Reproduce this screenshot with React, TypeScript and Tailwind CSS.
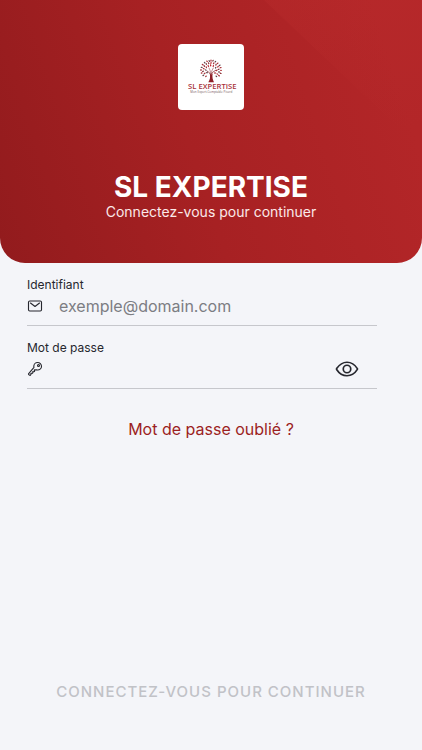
import React, { useState } from "react";
import { IoEyeOutline, IoKeyOutline, IoMailOutline } from "react-icons/io5";

// x, y, rotation, colour of every leaf of the tree
const leaves: [number, number, number, string][] = [
  [32, 14, 0, "#a8323a"],
  [27, 15, -30, "#5f4449"],
  [38, 14, 30, "#7d3a3f"],
  [20, 16, -50, "#b0353b"],
  [45, 17, 50, "#5f4449"],
  [32, 21, 10, "#b81f26"],
  [25, 22, -20, "#8a2a30"],
  [40, 22, 30, "#a8323a"],
  [13, 20, -40, "#5f4449"],
  [52, 22, 50, "#b0353b"],
  [18, 24, -10, "#7d3a3f"],
  [47, 26, 20, "#8a2a30"],
  [7, 26, -60, "#a8323a"],
  [58, 28, 60, "#5f4449"],
  [31, 28, -10, "#b81f26"],
  [39, 30, 20, "#b81f26"],
  [24, 30, -30, "#b81f26"],
  [12, 30, -40, "#8a2a30"],
  [53, 32, 40, "#b81f26"],
  [4, 34, -80, "#5f4449"],
  [61, 35, 80, "#a8323a"],
  [18, 34, -20, "#a8323a"],
  [46, 35, 30, "#5f4449"],
  [10, 38, -70, "#b0353b"],
  [55, 40, 70, "#7d3a3f"],
  [2, 42, -90, "#a8323a"],
  [62, 43, 90, "#b0353b"],
  [16, 42, -60, "#5f4449"],
  [49, 43, 60, "#a8323a"],
  [8, 46, -110, "#7d3a3f"],
  [56, 48, 110, "#5f4449"],
  [4, 51, -110, "#b0353b"],
  [61, 52, 110, "#8a2a30"],
  [13, 52, -120, "#a8323a"],
  [51, 54, 120, "#b0353b"],
  [20, 50, -90, "#5f4449"],
  [44, 51, 90, "#b0353b"],
  [9, 58, -120, "#5f4449"],
  [56, 59, 120, "#a8323a"],
  [17, 61, -130, "#a8323a"],
  [48, 61, 130, "#5f4449"],
];

const Logo = () => (
  <div className="flex size-[66px] items-center justify-center rounded-[4px] bg-white">
    <svg viewBox="0 0 198 198" className="size-full" role="img" aria-label="SL Expertise">
      <g transform="translate(67 36)">
        {leaves.map(([x, y, angle, color], i) => (
          <ellipse
            key={i}
            cx={x}
            cy={y}
            rx="2"
            ry="3.2"
            fill={color}
            transform={`rotate(${angle} ${x} ${y})`}
          />
        ))}
        <g fill="none" stroke="#8a2a30" strokeLinecap="round">
          <path d="M32 62 C33 53 27 50 20 45" strokeWidth="2.4" />
          <path d="M32 62 C31 51 38 48 46 43" strokeWidth="2.4" />
          <path d="M31 55 C31 46 29 42 26 36 M33 54 C33 46 36 41 39 36" strokeWidth="1.6" />
        </g>
        <path
          d="M28 52 C31 62 29 72 24 79 L41 79 C37 72 35 62 37 52 L32 57 Z"
          fill="#8f2027"
        />
      </g>
      <text
        x="103"
        y="135"
        textAnchor="middle"
        fontSize="23"
        fontWeight="600"
        fill="#a8323a"
        className="font-['Open_Sans',sans-serif]"
      >
        SL EXPERTISE
      </text>
      <text
        x="100"
        y="148"
        textAnchor="middle"
        fontSize="9"
        fill="#75595d"
        className="font-['Open_Sans',sans-serif]"
      >
        Mon Expert-Comptable Picard
      </text>
    </svg>
  </div>
);

const Header = () => (
  <header className="relative flex flex-col items-center overflow-hidden rounded-b-[25px] bg-linear-[72deg,#921b1d_0%,#a72123_45%,#b32628_90%] pt-11 pb-[42px]">
    <svg
      viewBox="0 0 422 263"
      preserveAspectRatio="none"
      className="absolute inset-0 size-full"
      aria-hidden="true"
    >
      <defs>
        <linearGradient id="shine" x1="0" y1="0" x2="0.2" y2="1">
          <stop offset="0" stopColor="#c03030" stopOpacity="0.25" />
          <stop offset="1" stopColor="#c03030" stopOpacity="0" />
        </linearGradient>
      </defs>
      <path d="M264 0 L422 150 V0 Z" fill="url(#shine)" />
    </svg>
    <div className="relative flex flex-col items-center">
      <Logo />
      <h1 className="mt-[61px] text-[28px] leading-8 font-bold text-white">SL EXPERTISE</h1>
      <p className="text-sm leading-[18px] text-[#fbe9e9]">Connectez-vous pour continuer</p>
    </div>
  </header>
);

const App = () => {
  const [visible, setVisible] = useState(false);

  return (
    <div className="flex min-h-screen flex-col bg-[#f4f5f9] font-['Inter',sans-serif] text-[#26272e]">
      <Header />
      <form className="flex flex-1 flex-col" onSubmit={(e) => e.preventDefault()}>
        <div className="mr-[45px] ml-[27px] flex flex-col gap-3 pt-3">
          <div className="border-b border-[#c6c7cc] pb-2">
            <label htmlFor="login" className="block text-xs leading-5">
              Identifiant
            </label>
            <div className="flex h-[22px] items-center gap-4">
              <IoMailOutline className="size-4 shrink-0 [&_*]:stroke-[36px]" />
              <input
                id="login"
                type="email"
                placeholder="exemple@domain.com"
                className="min-w-0 flex-1 bg-transparent text-base leading-5 outline-none placeholder:text-[#7c7d83]"
              />
            </div>
          </div>
          <div className="border-b border-[#c6c7cc] pb-2">
            <label htmlFor="password" className="block text-xs leading-5">
              Mot de passe
            </label>
            <div className="flex h-[22px] items-center gap-4">
              <IoKeyOutline className="size-4 shrink-0 [&_*]:stroke-[36px]" />
              <input
                id="password"
                type={visible ? "text" : "password"}
                className="min-w-0 flex-1 bg-transparent text-base leading-5 outline-none"
              />
              <button
                type="button"
                aria-label="Afficher le mot de passe"
                className="mr-[18px]"
                onClick={() => setVisible(!visible)}
              >
                <IoEyeOutline className="size-6 [&_*]:stroke-[36px]" />
              </button>
            </div>
          </div>
        </div>
        <a href="#" className="mt-7 self-center text-base leading-6 text-[#9c1f1f]">
          Mot de passe oublié ?
        </a>
        <button
          type="submit"
          className="mt-auto mb-12 self-center text-[15px] leading-5 font-medium tracking-[1px] text-[#c1c2c7] uppercase"
        >
          Connectez-vous pour continuer
        </button>
      </form>
    </div>
  );
};

export default App;
